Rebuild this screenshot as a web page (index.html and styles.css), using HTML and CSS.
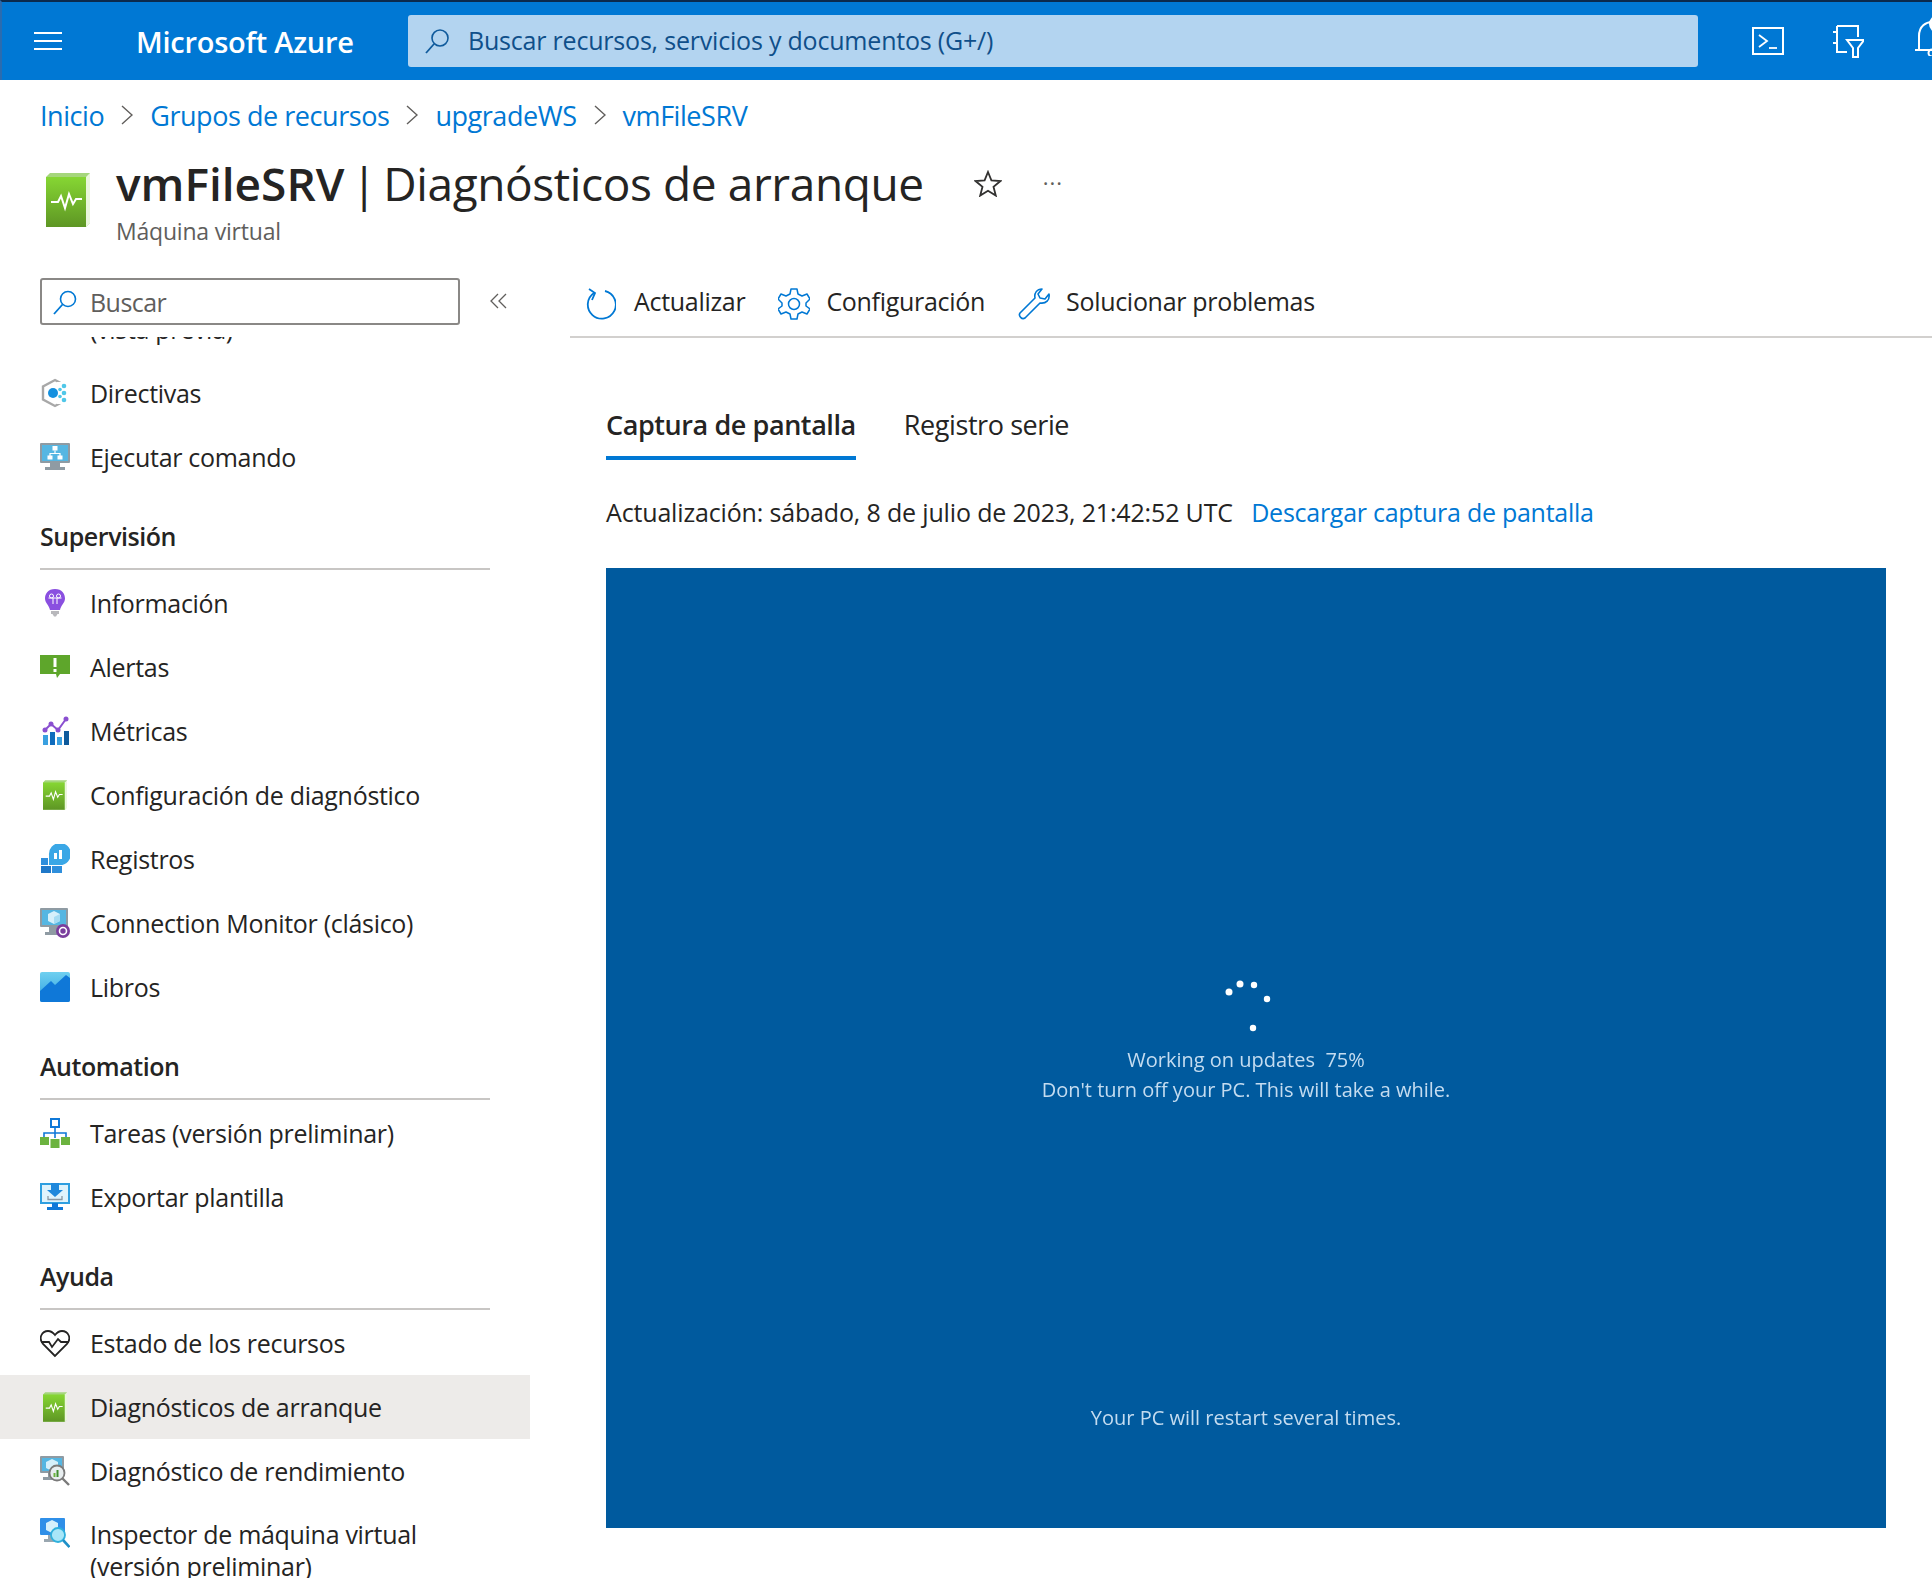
FILE: index.html
```html
<!DOCTYPE html>
<html lang="es">
<head>
  <meta charset="UTF-8" />
  <title>vmFileSRV | Diagnósticos de arranque</title>
  <link rel="stylesheet" href="styles.css">
</head>
<body>

<svg class="defs" width="0" height="0">
  <defs>
    <linearGradient id="bookGreen" x1="0" y1="0" x2="0" y2="1">
      <stop offset="0" stop-color="#86d633"/>
      <stop offset="1" stop-color="#5e9624"/>
    </linearGradient>
    <linearGradient id="skyBlue" x1="0" y1="0" x2="0" y2="1">
      <stop offset="0" stop-color="#6fd0f0"/>
      <stop offset="1" stop-color="#2d9fe0"/>
    </linearGradient>
    <symbol id="book" viewBox="0 0 44 54">
      <path d="M0 4 L4 0 H44 V50 L40 54 H0 Z" fill="#a5d67c"/>
      <rect x="0" y="4" width="40" height="50" fill="url(#bookGreen)"/>
      <path d="M40 4 L44 0 V50 L40 54 Z" fill="#eaf6dc"/>
      <path d="M5 29 H12 L15 23 L19 35 L23 21 L27 31 L30 26 H36" fill="none" stroke="#fff" stroke-width="2"/>
    </symbol>
  </defs>
</svg>

<header class="topbar">
  <button class="menu-btn" aria-label="Menú"><span></span><span></span><span></span></button>
  <div class="brand">Microsoft Azure</div>
  <div class="global-search">
    <svg class="lens" width="28" height="28" viewBox="0 0 28 28"><circle cx="17" cy="11" r="8" fill="none" stroke="#0f5a9c" stroke-width="1.6"/><path d="M11 17 L3 26" stroke="#0f5a9c" stroke-width="1.8"/></svg>
    <span>Buscar recursos, servicios y documentos (G+/)</span>
  </div>
  <div class="top-icons">
    <svg width="32" height="28" viewBox="0 0 32 28"><rect x="1" y="1" width="30" height="26" fill="none" stroke="#fff" stroke-width="2"/><path d="M7 8 L15 14 L7 20" fill="none" stroke="#fff" stroke-width="1.8"/><path d="M17 21 H25" stroke="#fff" stroke-width="1.8"/></svg>
    <svg width="32" height="34" viewBox="0 0 32 34"><path d="M5 2 H26 V13 M15 28 H5 V2" fill="none" stroke="#fff" stroke-width="2"/><path d="M1 8 H6 M1 19 H6" stroke="#fff" stroke-width="2"/><path d="M15 16 H32 L26 24 V33 H21 V24 Z" fill="#0078d4" stroke="#fff" stroke-width="2"/></svg>
    <svg class="bell" width="40" height="42" viewBox="0 0 40 42"><path d="M1 36 H34 M5 36 V22 C5 12 12 8 18 8 C24 8 30 12 30 22 V36" fill="none" stroke="#fff" stroke-width="2"/><circle cx="18" cy="39" r="3.5" fill="none" stroke="#fff" stroke-width="2"/><circle cx="24" cy="10" r="9" fill="#fff"/></svg>
  </div>
</header>

<nav class="breadcrumb">
  <a>Inicio</a>
  <svg width="12" height="20" viewBox="0 0 12 20"><path d="M1 1 L11 10 L1 19" fill="none" stroke="#605e5c" stroke-width="1.4"/></svg>
  <a>Grupos de recursos</a>
  <svg width="12" height="20" viewBox="0 0 12 20"><path d="M1 1 L11 10 L1 19" fill="none" stroke="#605e5c" stroke-width="1.4"/></svg>
  <a>upgradeWS</a>
  <svg width="12" height="20" viewBox="0 0 12 20"><path d="M1 1 L11 10 L1 19" fill="none" stroke="#605e5c" stroke-width="1.4"/></svg>
  <a>vmFileSRV</a>
</nav>

<section class="title-block">
  <svg class="title-icon" width="44" height="54"><use href="#book"/></svg>
  <div class="title-text">
    <div class="title-row">
      <h1><b>vmFileSRV</b><span class="sep">|</span>Diagnósticos de arranque</h1>
      <svg class="star" width="28" height="27" viewBox="0 0 28 27"><path d="M14 2 L17.4 10.4 L26.5 11 L19.5 16.8 L21.8 25.6 L14 20.8 L6.2 25.6 L8.5 16.8 L1.5 11 L10.6 10.4 Z" fill="none" stroke="#323130" stroke-width="1.8"/></svg>
      <span class="more">···</span>
    </div>
    <div class="subtitle">Máquina virtual</div>
  </div>
</section>

<div class="layout">
  <aside class="sidebar">
    <div class="side-search-row">
      <div class="side-search">
        <svg width="26" height="26" viewBox="0 0 26 26"><circle cx="16" cy="10" r="7.5" fill="none" stroke="#0078d4" stroke-width="1.6"/><path d="M10.5 15.5 L2 25" stroke="#0078d4" stroke-width="1.8"/></svg>
        <span>Buscar</span>
      </div>
      <svg class="collapse" width="18" height="16" viewBox="0 0 18 16"><path d="M8 1 L1 8 L8 15 M16 1 L9 8 L16 15" fill="none" stroke="#605e5c" stroke-width="1.3"/></svg>
    </div>

    <div class="side-list">
      <div class="row row-clipped"><span class="label">(vista previa)</span></div>

      <div class="row">
        <svg class="ico" viewBox="0 0 30 30"><path d="M15 2 L27 8.500 V21.500 L15 28 L3 21.500 V8.500 Z" fill="none" stroke="#a8a8a8" stroke-width="2.4"/><rect x="17" y="4" width="12" height="22" fill="#fff"/><circle cx="13" cy="15" r="5" fill="#1490df"/><circle cx="24" cy="8" r="2.300" fill="#50c7e8"/><circle cx="24" cy="15" r="2.300" fill="#50c7e8"/><circle cx="24" cy="22" r="2.300" fill="#50c7e8"/><circle cx="20" cy="11.500" r="1.800" fill="#50c7e8"/><circle cx="20" cy="18.500" r="1.800" fill="#50c7e8"/></svg>
        <span class="label">Directivas</span>
      </div>
      <div class="row">
        <svg class="ico" viewBox="0 0 30 30"><rect x="0" y="1" width="30" height="20" rx="1" fill="#8f9ba3"/><rect x="2" y="3" width="26" height="16" fill="#55b6e2"/><path d="M10 21 H20 V25 H25 V28 H5 V25 H10 Z" fill="#8f9ba3"/><rect x="12.500" y="4" width="5" height="4.500" fill="#fff"/><path d="M15 8.500 V11.500 M10 14 V11.500 H20 V14" fill="none" stroke="#fff" stroke-width="1.2"/><rect x="7.500" y="13.500" width="5" height="4" fill="#fff"/><rect x="17.500" y="13.500" width="5" height="4" fill="#fff"/></svg>
        <span class="label">Ejecutar comando</span>
      </div>

      <h2 class="group">Supervisión</h2>
      <div class="row">
        <svg class="ico" viewBox="0 0 30 30"><path d="M15 1 C8 1 5 6 5 10.500 C5 15 9 17 10 22 H20 C21 17 25 15 25 10.500 C25 6 22 1 15 1 Z" fill="#8a4fe0"/><path d="M11 23 H19 V26 H17.500 L16 28.500 H14 L12.500 26 H11 Z" fill="#b8b8bc"/><circle cx="11.500" cy="8" r="2" fill="none" stroke="#fff" stroke-width="1"/><circle cx="18.500" cy="8" r="2" fill="none" stroke="#fff" stroke-width="1"/><path d="M8.500 10 H21.500 M13 10 V16 M17 10 V16" fill="none" stroke="#fff" stroke-width="1"/></svg>
        <span class="label">Información</span>
      </div>
      <div class="row">
        <svg class="ico" viewBox="0 0 30 30"><path d="M0 3 H30 V22 H20 L17 26 L16 22 H0 Z" fill="#5ea62b"/><rect x="13.500" y="6" width="3" height="9" fill="#fff"/><rect x="13.500" y="17" width="3" height="3" fill="#fff"/></svg>
        <span class="label">Alertas</span>
      </div>
      <div class="row">
        <svg class="ico" viewBox="0 0 30 30"><rect x="3" y="19" width="5" height="10" fill="#3aa0e0"/><rect x="10" y="16" width="5" height="13" fill="#0f6cbd"/><rect x="17" y="21" width="5" height="8" fill="#3aa0e0"/><rect x="24" y="15" width="5" height="14" fill="#0f5a9c"/><path d="M5 14 L11 8 L18 14 L26 3" fill="none" stroke="#8a4fd0" stroke-width="2"/><circle cx="5" cy="14" r="2.500" fill="#8a4fd0"/><circle cx="11" cy="8" r="2.500" fill="#8a4fd0"/><circle cx="18" cy="14" r="2.500" fill="#8a4fd0"/><circle cx="26" cy="3" r="2.500" fill="#8a4fd0"/></svg>
        <span class="label">Métricas</span>
      </div>
      <div class="row">
        <svg class="ico ico-book" width="24" height="30"><use href="#book"/></svg>
        <span class="label">Configuración de diagnóstico</span>
      </div>
      <div class="row">
        <svg class="ico" viewBox="0 0 30 30"><rect x="1" y="14" width="7" height="7" fill="#2f8fdc"/><rect x="1" y="22" width="10" height="7" fill="#1f78c8"/><rect x="12" y="22" width="10" height="7" fill="#2f8fdc"/><path d="M9 21 V11 A11 11 0 1 1 20 21 Z" fill="#3aa7e6"/><rect x="14" y="9" width="3" height="6" fill="#fff"/><rect x="19" y="6" width="3" height="9" fill="#fff"/></svg>
        <span class="label">Registros</span>
      </div>
      <div class="row">
        <svg class="ico" viewBox="0 0 30 30"><rect x="0" y="0" width="28" height="19" rx="1" fill="#8f9ba3"/><rect x="2" y="2" width="24" height="15" fill="#55b6e2"/><path d="M9 19 H17 V24 H21 V27 H5 V24 H9 Z" fill="#8f9ba3"/><path d="M14 3 L20 6 V13 L14 16 L8 13 V6 Z" fill="#d6f0fb"/><path d="M14 9 L20 6 V13 L14 16 Z" fill="#a6dcf3"/><circle cx="23" cy="23" r="7" fill="#7a3e9d"/><circle cx="23" cy="23" r="3.500" fill="none" stroke="#fff" stroke-width="1.600"/></svg>
        <span class="label">Connection Monitor (clásico)</span>
      </div>
      <div class="row">
        <svg class="ico" viewBox="0 0 30 30"><rect x="0" y="0" width="30" height="30" rx="2" fill="url(#skyBlue)"/><path d="M0 19 L11 9 L15 13 L26 3 L30 6 V28 A2 2 0 0 1 28 30 H2 A2 2 0 0 1 0 28 Z" fill="#0f78d8"/></svg>
        <span class="label">Libros</span>
      </div>

      <h2 class="group">Automation</h2>
      <div class="row">
        <svg class="ico" viewBox="0 0 30 30"><rect x="11" y="1" width="8" height="8" fill="#fff" stroke="#0f78d8" stroke-width="2"/><path d="M15 9 V20 M4 20 V15 H26 V20" fill="none" stroke="#0f78d8" stroke-width="1.600"/><rect x="0" y="19" width="9" height="8" fill="#6cb33f"/><rect x="10.500" y="21" width="9" height="9" fill="#6cb33f"/><rect x="21" y="19" width="9" height="8" fill="#6cb33f"/></svg>
        <span class="label">Tareas (versión preliminar)</span>
      </div>
      <div class="row">
        <svg class="ico" viewBox="0 0 30 30"><rect x="1" y="2" width="28" height="19" fill="#dff3fc" stroke="#2f9fe0" stroke-width="2"/><path d="M11 1 H19 V8 H23 L15 15 L7 8 H11 Z" fill="#1f88dc"/><path d="M8 14 V17.500 H22 V14" fill="none" stroke="#8a98a3" stroke-width="1.300"/><path d="M12 21 H18 V25 H23 V28 H7 V25 H12 Z" fill="#0f78d8"/></svg>
        <span class="label">Exportar plantilla</span>
      </div>

      <h2 class="group">Ayuda</h2>
      <div class="row">
        <svg class="ico" viewBox="0 0 30 30"><path d="M15 28 L3 16 C-2 10 2 3 8 3 C11 3 13 4.500 15 7 C17 4.500 19 3 22 3 C28 3 32 10 27 16 Z" fill="none" stroke="#252423" stroke-width="1.800"/><path d="M1 14 H9 L12 19 L18 11 L21 14 H29" fill="#fff" stroke="#252423" stroke-width="1.800"/></svg>
        <span class="label">Estado de los recursos</span>
      </div>
      <div class="row row-active">
        <svg class="ico ico-book" width="24" height="30"><use href="#book"/></svg>
        <span class="label">Diagnósticos de arranque</span>
      </div>
      <div class="row">
        <svg class="ico" viewBox="0 0 30 30"><rect x="0" y="0" width="24" height="17" rx="1" fill="#8f9ba3"/><rect x="2" y="2" width="20" height="13" fill="#55b6e2"/><path d="M8 17 H15 V21 H18 V24 H3 V21 H8 Z" fill="#8f9ba3"/><path d="M12 3 L18 6 V12 L12 15 L6 12 V6 Z" fill="#d6f0fb"/><circle cx="17" cy="17" r="7.500" fill="#e8eef0" stroke="#7a7a7a" stroke-width="1.800"/><path d="M22.500 22.500 L29 29" stroke="#7a7a7a" stroke-width="2.400"/><rect x="13.500" y="17" width="2" height="4" fill="#6cb33f"/><rect x="16.500" y="14" width="2" height="7" fill="#3f8f2f"/></svg>
        <span class="label">Diagnóstico de rendimiento</span>
      </div>
      <div class="row row-double">
        <svg class="ico" viewBox="0 0 30 30"><rect x="0" y="0" width="25" height="17" rx="1" fill="#2f8fe8"/><path d="M8 17 H16 V21 H19 V24 H4 V21 H8 Z" fill="#9aa7b0"/><path d="M12 2 L18 5 V12 L12 15 L6 12 V5 Z" fill="#d6f0fb"/><circle cx="18" cy="17" r="7" fill="#a8e6f8" stroke="#2fb0dc" stroke-width="1.800"/><path d="M23 22 L29.500 29" stroke="#1f90c8" stroke-width="2.600"/></svg>
        <span class="label">Inspector de máquina virtual (versión preliminar)</span>
      </div>
    </div>
  </aside>

  <main class="content">
    <div class="toolbar">
      <div class="tool">
        <svg width="32" height="32" viewBox="0 0 32 32"><path d="M10 5 A14 14 0 1 0 21 3" fill="none" stroke="#0078d4" stroke-width="1.800"/><path d="M5 1 L11 5 L8 12" fill="none" stroke="#0078d4" stroke-width="1.800"/></svg>
        <span>Actualizar</span>
      </div>
      <div class="tool">
        <svg width="32" height="32" viewBox="0 0 32 32"><path d="M13 1 H19 L20 6 L24 8 L29 6 L32 11 L28 15 V18 L32 21 L29 26 L24 24 L20 26 L19 31 H13 L12 26 L8 24 L3 26 L0 21 L4 18 V15 L0 11 L3 6 L8 8 L12 6 Z" fill="none" stroke="#0078d4" stroke-width="1.500" stroke-linejoin="round"/><circle cx="16" cy="16" r="5.500" fill="none" stroke="#0078d4" stroke-width="1.500"/></svg>
        <span>Configuración</span>
      </div>
      <div class="tool">
        <svg width="32" height="32" viewBox="0 0 32 32"><path d="M24 1 L20 6 L22 10 L27 11 L31 6 C32 12 28 16 22 15 L7 30 C4 32 0 28 2 25 L17 10 C16 5 19 1 24 1 Z" fill="none" stroke="#0078d4" stroke-width="1.600" stroke-linejoin="round"/></svg>
        <span>Solucionar problemas</span>
      </div>
    </div>

    <div class="tabs">
      <div class="tab tab-active">Captura de pantalla</div>
      <div class="tab">Registro serie</div>
    </div>

    <p class="updated">Actualización: sábado, 8 de julio de 2023, 21:42:52 UTC <a>Descargar captura de pantalla</a></p>

    <div class="screen">
      <svg class="spinner" width="50" height="52" viewBox="0 0 50 52">
        <circle cx="8" cy="12" r="3.500"/><circle cx="19" cy="4" r="3.500"/><circle cx="33" cy="5" r="3.200"/><circle cx="46" cy="19" r="3.200"/><circle cx="32" cy="48" r="3.200"/>
      </svg>
      <div class="screen-text">Working on updates&nbsp; 75%</div>
      <div class="screen-text">Don't turn off your PC. This will take a while.</div>
      <div class="screen-text screen-last">Your PC will restart several times.</div>
    </div>
  </main>
</div>

</body>
</html>
```

FILE: styles.css
```css
:root {
  --azure: #0078d4;
  --text: #252423;
  --muted: #605e5c;
  --line: #c8c6c4;
  --font: "Open Sans", "Noto Sans", sans-serif;
}

* {
  box-sizing: border-box;
}

html, body {
  height: 1578px;
  overflow: hidden;
}

body {
  margin: 0;
  background: #fff;
  color: var(--text);
  font-family: var(--font);
  font-size: 25px;
  letter-spacing: -0.3px;
}

a {
  color: var(--azure);
}

h1, h2, p {
  margin: 0;
  font-weight: normal;
}

.defs {
  display: block;
}

/* top bar */
.topbar {
  height: 80px;
  background: var(--azure);
  border-top: 2px solid #0b2a4d;
  border-left: 2px solid #2a6cb0;
  display: flex;
  align-items: center;
  overflow: hidden;
  color: #fff;
}

.menu-btn {
  width: 28px;
  flex: none;
  margin-left: 32px;
  padding: 0;
  border: none;
  background: none;
  display: flex;
  flex-direction: column;
  gap: 6px;
}

.menu-btn span {
  display: block;
  height: 2px;
  background: #fff;
}

.brand {
  margin-left: 74px;
  width: 272px;
  flex: none;
  font-size: 29px;
  font-weight: 600;
  letter-spacing: -0.25px;
  white-space: nowrap;
}

.global-search {
  width: 1290px;
  height: 52px;
  flex: none;
  background: #b3d4f0;
  border-radius: 3px;
  display: flex;
  align-items: center;
  gap: 17px;
  padding-left: 15px;
  color: #0f4f8a;
  letter-spacing: -0.2px;
}

.global-search span {
  margin-top: -2px;
}

.top-icons {
  display: flex;
  align-items: center;
  margin-left: 54px;
  gap: 48px;
  flex: none;
}

.top-icons svg {
  flex: none;
}

.bell {
  margin-left: 2px;
  margin-top: -12px;
}

/* breadcrumb + title */
.breadcrumb {
  height: 72px;
  padding: 0 0 2px 40px;
  display: flex;
  align-items: center;
  gap: 17px;
  font-size: 27px;
  letter-spacing: -0.45px;
}

.title-block {
  height: 120px;
  padding-left: 46px;
  display: flex;
  align-items: flex-start;
  gap: 26px;
}

.title-icon {
  margin-top: 21px;
  flex: none;
}

.title-row {
  display: flex;
  align-items: center;
  height: 62px;
}

h1 {
  font-size: 46px;
  line-height: 62px;
  letter-spacing: -0.4px;
  white-space: nowrap;
}

h1 b {
  font-weight: 600;
  letter-spacing: 0;
}

.sep {
  margin: 0 7px;
}

.star {
  margin-left: 50px;
}

.more {
  margin-left: 41px;
  font-size: 22px;
  color: var(--muted);
  letter-spacing: 1px;
  margin-top: -3px;
}

.subtitle {
  font-size: 23px;
  line-height: 32px;
  margin-top: 1px;
  color: var(--muted);
  letter-spacing: -0.2px;
}

/* two columns */
.layout {
  display: grid;
  grid-template-columns: 530px 1fr;
  column-gap: 40px;
}

.side-search-row {
  height: 65px;
  padding: 6px 0 0 40px;
  display: flex;
  align-items: flex-start;
}

.side-search {
  width: 420px;
  height: 47px;
  border: 2px solid #8a8886;
  border-radius: 3px;
  display: flex;
  align-items: center;
  gap: 12px;
  padding-left: 10px;
  color: var(--muted);
  letter-spacing: -0.55px;
}

.collapse {
  margin: 15px 0 0 30px;
}

.side-list {
  height: 1241px;
  overflow: hidden;
}

.row {
  height: 64px;
  display: flex;
  align-items: center;
  padding-left: 40px;
  line-height: 32px;
}

/* list is scrolled: only the tail of this row shows */
.row-clipped {
  height: 24px;
  padding-left: 90px;
  align-items: flex-start;
  overflow: hidden;
}

.row-clipped .label {
  margin-top: -24px;
}

.row-active {
  background: #edebe9;
}

.row-double {
  height: 96px;
  align-items: flex-start;
  padding-top: 15px;
}

.row-double .label {
  width: 360px;
}

.ico {
  width: 30px;
  height: 30px;
  margin-right: 20px;
  flex: none;
}

.ico-book {
  width: 24px;
  margin-left: 3px;
  margin-right: 23px;
}

.group {
  margin: 0 40px 1px;
  padding: 31px 0 16px;
  border-bottom: 2px solid var(--line);
  font-size: 25px;
  line-height: 32px;
  font-weight: 600;
  letter-spacing: -0.45px;
}

/* content */
.toolbar {
  height: 66px;
  border-bottom: 2px solid #d2d0ce;
  padding-left: 14px;
  display: flex;
  align-items: center;
  gap: 33px;
  letter-spacing: -0.3px;
}

.tool {
  display: flex;
  align-items: center;
  gap: 16px;
}

.tool:first-child {
  gap: 18px;
}

.tool span {
  margin-top: -6px;
}

.tabs {
  margin: 54px 0 0 36px;
  display: flex;
  gap: 48px;
  font-size: 27px;
  letter-spacing: -0.42px;
}

.tab {
  height: 68px;
  padding-top: 15px;
  line-height: 36px;
}

.tab-active {
  font-weight: 600;
  border-bottom: 4px solid var(--azure);
}

.updated {
  margin: 35px 0 0 36px;
  line-height: 34px;
  letter-spacing: -0.16px;
}

.updated a {
  margin-left: 12px;
  letter-spacing: -0.26px;
}

.screen {
  width: 1280px;
  height: 960px;
  margin: 39px 0 0 36px;
  background: #005a9e;
  padding-top: 412px;
  display: flex;
  flex-direction: column;
  align-items: center;
}

.spinner {
  flex: none;
  fill: #fff;
  filter: blur(0.4px);
}

.screen-text {
  height: 30px;
  line-height: 30px;
  font-size: 20px;
  font-weight: 400;
  letter-spacing: 0;
  color: #c4dcf0;
  filter: blur(0.6px);
  white-space: nowrap;
}

.spinner + .screen-text {
  margin-top: 13px;
}

.screen-last {
  margin-top: 298px;
}
```
